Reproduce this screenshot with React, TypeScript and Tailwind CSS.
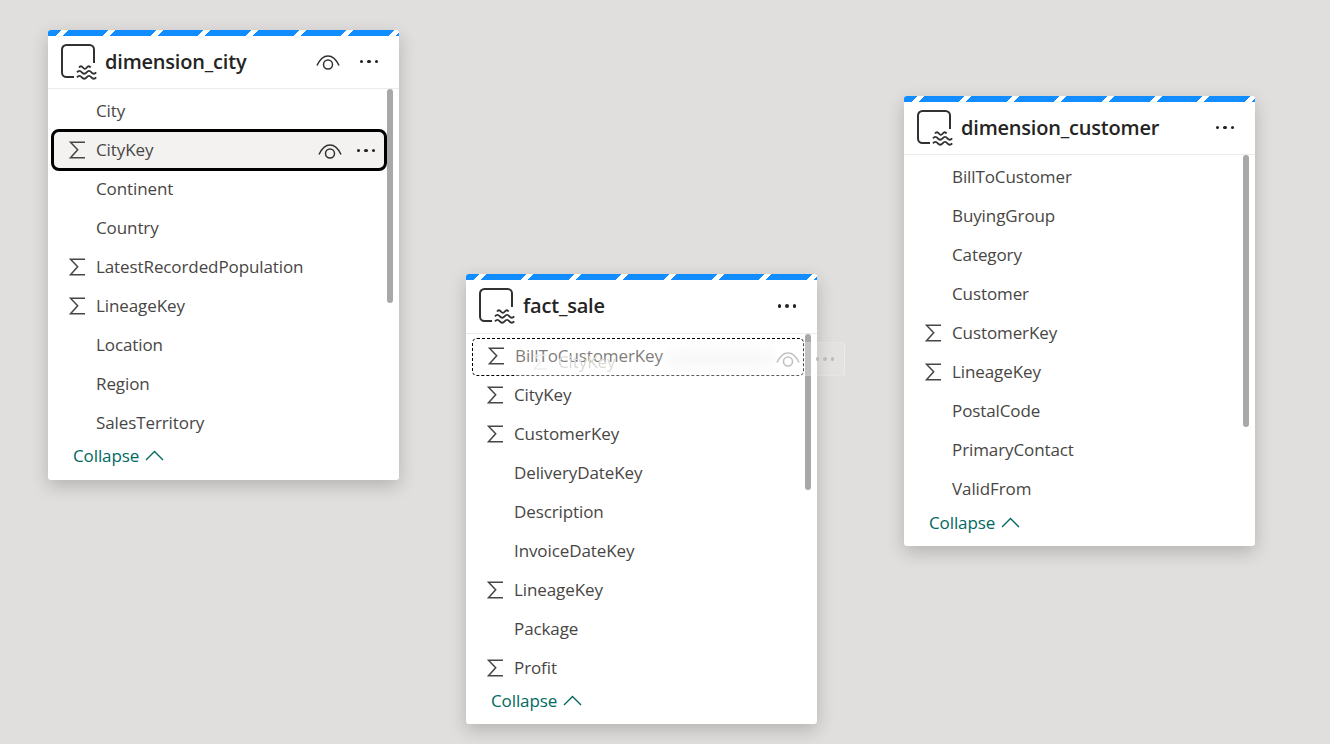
const FONT = "font-['Open_Sans','Noto_Sans',sans-serif]";

type Field = { name: string; sum?: boolean; selected?: boolean; dashed?: boolean };

const cityFields: Field[] = [
  { name: 'City' },
  { name: 'CityKey', sum: true, selected: true },
  { name: 'Continent' },
  { name: 'Country' },
  { name: 'LatestRecordedPopulation', sum: true },
  { name: 'LineageKey', sum: true },
  { name: 'Location' },
  { name: 'Region' },
  { name: 'SalesTerritory' },
];

const saleFields: Field[] = [
  { name: 'BillToCustomerKey', sum: true, dashed: true },
  { name: 'CityKey', sum: true },
  { name: 'CustomerKey', sum: true },
  { name: 'DeliveryDateKey' },
  { name: 'Description' },
  { name: 'InvoiceDateKey' },
  { name: 'LineageKey', sum: true },
  { name: 'Package' },
  { name: 'Profit', sum: true },
];

const customerFields: Field[] = [
  { name: 'BillToCustomer' },
  { name: 'BuyingGroup' },
  { name: 'Category' },
  { name: 'Customer' },
  { name: 'CustomerKey', sum: true },
  { name: 'LineageKey', sum: true },
  { name: 'PostalCode' },
  { name: 'PrimaryContact' },
  { name: 'ValidFrom' },
];

function LakeIcon() {
  return (
    <svg width="36" height="36" viewBox="0 0 36 36" fill="none" stroke="#323130" className="shrink-0">
      <path d="M13 33H5.500A4.500 4.500 0 0 1 1 28.500V5.500A4.500 4.500 0 0 1 5.500 1h23a4.500 4.500 0 0 1 4.500 4.500V19" strokeWidth="2" />
      <path d="M18 23.500c1.300-1.700 2.600-1.700 3.900 0s2.600 1.700 3.900 0 2.600-1.700 3.900 0" strokeWidth="1.800" />
      <path d="M16 28.300c1.600-1.900 3.200-1.900 4.800 0s3.200 1.900 4.800 0 3.200-1.900 4.800 0 3.200 1.900 4.800 0" strokeWidth="1.800" />
      <path d="M16 33.300c1.600-1.900 3.200-1.900 4.800 0s3.200 1.900 4.800 0 3.200-1.900 4.800 0 3.200 1.900 4.800 0" strokeWidth="1.800" />
    </svg>
  );
}

function EyeIcon({ className = '' }: { className?: string }) {
  return (
    <svg width="24" height="16" viewBox="0 0 24 16" fill="none" stroke="#323130" strokeWidth="1.500" className={className}>
      <path d="M1 11.500C4 5 8 2 12 2s8 3 11 9.500" />
      <circle cx="12" cy="10.500" r="4.500" />
    </svg>
  );
}

function Dots({ color = 'bg-[#252423]' }: { color?: string }) {
  return (
    <div className="flex gap-[4px]">
      <span className={`size-[3.500px] rounded-full ${color}`} />
      <span className={`size-[3.500px] rounded-full ${color}`} />
      <span className={`size-[3.500px] rounded-full ${color}`} />
    </div>
  );
}

function Sigma() {
  return (
    <svg width="17" height="18" viewBox="0 0 17 18" fill="none" stroke="#484644" strokeWidth="1.500" className="shrink-0">
      <path d="M16 1.200H1.500L8.700 8.800 1.500 16.800H16" />
    </svg>
  );
}

function Row({ field }: { field: Field }) {
  return (
    <div className={`relative flex h-[39px] items-center pb-[2px] pl-[21px] text-[#484644] ${field.dashed ? 'translate-x-px' : ''}`}>
      {field.selected && (
        <div className="absolute left-[3px] right-[12px] top-[-2px] bottom-[-1px] rounded-[8px] border-[3px] border-black bg-[#f3f2f1]" />
      )}
      {field.dashed && (
        <div className="absolute left-[5px] right-[14px] top-[1px] bottom-[0px] rounded-[5px] border border-dashed border-black" />
      )}
      <div className="relative w-[27px] shrink-0">{field.sum && <Sigma />}</div>
      <span className="relative text-[17px] leading-none tracking-[-0.1px]">{field.name}</span>
      {field.selected && (
        <div className="absolute right-[24px] top-0 flex h-full items-center gap-[15px]">
          <EyeIcon />
          <Dots />
        </div>
      )}
    </div>
  );
}

function TableCard({ title, fields, position, thumb, headerH, collapsePad, eye }: {
  title: string;
  fields: Field[];
  position: string;
  thumb: string;
  headerH: string;
  collapsePad: string;
  eye?: boolean;
}) {
  return (
    <div className={`absolute flex h-[450px] w-[351px] flex-col overflow-hidden rounded-[3px] bg-white shadow-[0_6px_18px_rgba(0,0,0,0.2)] ${position}`}>
      <div className="h-[6px] shrink-0 bg-[repeating-linear-gradient(135deg,#118dff_0,#118dff_9.200px,#ffffff_9.200px,#ffffff_14.200px,#118dff_14.200px,#118dff_33.660px)]" />
      <div className={`flex shrink-0 items-center border-b border-[#edebe9] pb-[1px] pl-[13px] pr-[21px] ${headerH}`}>
        <LakeIcon />
        <span className="ml-[8px] text-[20px] font-semibold leading-none tracking-[-0.2px] text-[#252423]">{title}</span>
        <div className="ml-auto flex items-center gap-[20px]">
          {eye && <EyeIcon />}
          <Dots />
        </div>
      </div>
      <div className="relative flex-1 pt-[3px]">
        {fields.map((f) => (
          <Row key={f.name} field={f} />
        ))}
        <div className={`absolute right-[6px] top-0 w-[6px] rounded-full bg-[#a8a8a8] ${thumb}`} />
      </div>
      <div className={`flex h-[42px] shrink-0 items-center gap-[6px] pl-[25px] text-[17px] leading-none tracking-[-0.1px] text-[#00695f] ${collapsePad}`}>
        Collapse
        <svg width="19" height="11" viewBox="0 0 19 11" fill="none" stroke="#00695f" strokeWidth="1.400">
          <path d="M1 10l8.500-8.500L18 10" />
        </svg>
      </div>
    </div>
  );
}

export default function App() {
  return (
    <div className={`relative h-[744px] w-[1330px] overflow-hidden bg-[#e1dfdd] ${FONT}`}>
      <TableCard title="dimension_city" fields={cityFields} position="left-[48px] top-[30px]" thumb="h-[214px]" headerH="h-[53px]" collapsePad="pb-[18px]" eye />
      <TableCard title="fact_sale" fields={saleFields} position="left-[466px] top-[274px]" thumb="h-[156px]" headerH="h-[54px]" collapsePad="pb-[17px]" />
      <TableCard title="dimension_customer" fields={customerFields} position="left-[904px] top-[96px]" thumb="h-[272px]" headerH="h-[53px]" collapsePad="pb-[16px]" />

      {/* drag ghost */}
      <div className="absolute left-[515px] top-[342px] flex h-[34px] w-[330px] items-center overflow-hidden rounded-[3px] border border-white/10 bg-[linear-gradient(to_right,rgba(255,255,255,0.3)_0,rgba(255,255,255,0.3)_91.500%,rgba(255,255,255,0.12)_91.500%)] pl-[17px] pr-[10px]">
        <div className="absolute left-[150px] top-[7px] h-[18px] w-[110px] rounded-full bg-[#d2d0ce]/15 blur-[6px]" />
        <svg width="15" height="16" viewBox="0 0 17 18" fill="none" stroke="#edebe9" strokeWidth="1.500" className="relative top-[3px] shrink-0">
          <path d="M16 1.200H1.500L8.700 8.800 1.500 16.800H16" />
        </svg>
        <span className="relative top-[2px] ml-[10px] text-[17px] leading-none tracking-[-0.1px] text-[#dcdad8] blur-[0.4px]">CityKey</span>
        <div className="relative ml-auto flex items-center gap-[16px]">
          <EyeIcon className="opacity-30" />
          <Dots color="bg-[#bdbbb9]" />
        </div>
      </div>
    </div>
  );
}
